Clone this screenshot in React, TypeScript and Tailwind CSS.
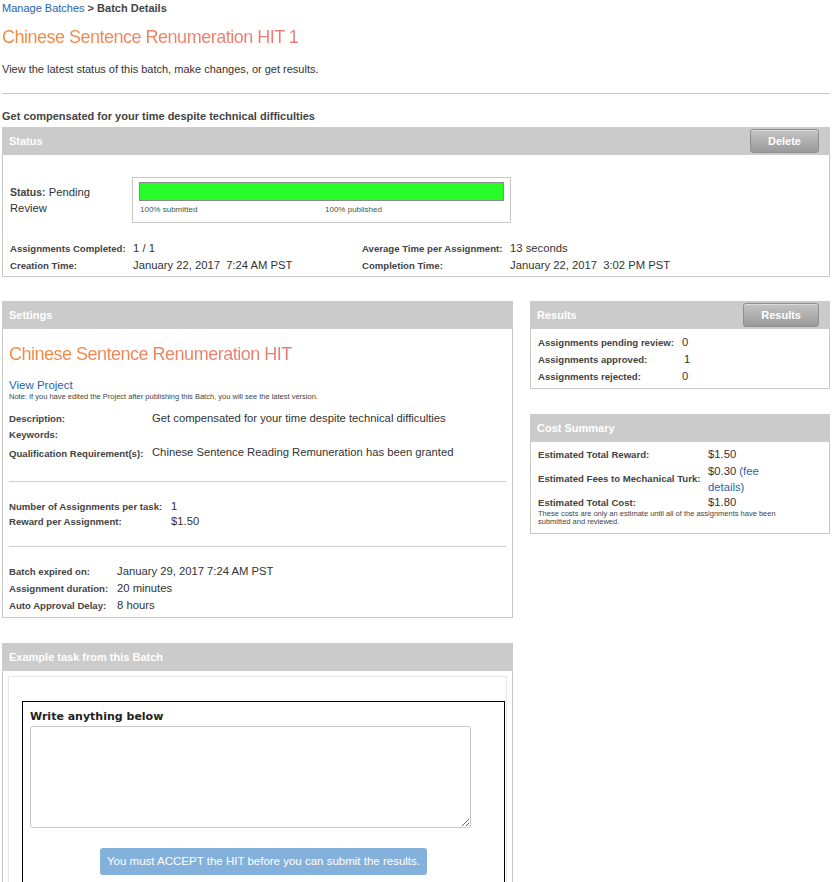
import React from 'react';

const LABEL = 'text-[9.6px] font-bold text-[#444] whitespace-nowrap';
const VALUE = 'text-[11.25px] text-[#333] whitespace-pre';
const TITLE = 'bg-gradient-to-r from-[#f28b36] to-[#ea7a78] bg-clip-text text-[18px] font-light leading-[24px] tracking-[-0.5px] text-transparent';

function PanelHeader({ title, button }: { title: string; button?: string }) {
  return (
    <div className="flex h-[28px] items-center justify-between bg-[#cbcbcb] pl-[7px] pr-[11px]">
      <span className="text-[11px] font-bold text-white">{title}</span>
      {button && (
        <button className="h-[24px] rounded-[3px] border border-[#8e8e8e] bg-gradient-to-b from-[#c4c4c4] to-[#9a9a9a] px-[17px] text-[11px] font-bold text-white shadow-[inset_0_1px_0_rgba(255,255,255,0.4)]">
          {button}
        </button>
      )}
    </div>
  );
}

function Row({ label, value, labelW, className = '' }: { label: string; value: React.ReactNode; labelW: string; className?: string }) {
  return (
    <div className={`flex items-baseline ${className}`}>
      <span className={`${LABEL} ${labelW} shrink-0`}>{label}</span>
      <span className={VALUE}>{value}</span>
    </div>
  );
}

function StatusPanel() {
  return (
    <div>
      <PanelHeader title="Status" button="Delete" />
      <div className="border border-t-0 border-[#c8c8c8] px-[7px] pb-[2px]">
        <div className="flex pt-[22px]">
          <div className="w-[122px] pt-[7px] text-[11.25px] leading-[16px] text-[#333]">
            <span className="text-[10.5px] font-bold text-[#444]">Status:</span> Pending
            <br />
            Review
          </div>
          <div className="h-[46px] w-[379px] border border-[#c8c8c8] px-[6px] pt-[4px]">
            <div className="h-[19px] border border-[#8a8a8a] bg-[#27fd27]" />
            <div className="mt-[3px] flex text-[8px] text-[#3d5c3d]">
              <span className="ml-[1px] w-[185px]">100% submitted</span>
              <span>100% published</span>
            </div>
          </div>
        </div>
        <div className="mt-[17px] flex">
          <div className="w-[352px] leading-[16px]">
            <Row label="Assignments Completed:" value="1 / 1" labelW="w-[123px]" />
            <Row label="Creation Time:" value="January 22, 2017  7:24 AM PST" labelW="w-[123px]" />
          </div>
          <div className="leading-[16px]">
            <Row label="Average Time per Assignment:" value="13 seconds" labelW="w-[148px]" />
            <Row label="Completion Time:" value="January 22, 2017  3:02 PM PST" labelW="w-[148px]" />
          </div>
        </div>
      </div>
    </div>
  );
}

function SettingsPanel() {
  return (
    <div>
      <PanelHeader title="Settings" />
      <div className="h-[289px] border border-t-0 border-[#c8c8c8] px-[6px]">
        <div className={`mt-[13px] inline-block ${TITLE}`}>Chinese Sentence Renumeration HIT</div>
        <div className="mt-[11px] text-[11.5px] leading-[14px] text-[#2464b0]">View Project</div>
        <div className="text-[7.5px] leading-[10px] text-[#444]">
          Note: If you have edited the Project after publishing this Batch, you will see the latest version.
        </div>
        <div className="mt-[8px] leading-[16px]">
          <Row label="Description:" value="Get compensated for your time despite technical difficulties" labelW="w-[143px]" />
          <Row label="Keywords:" value="" labelW="w-[143px]" />
          <div className="mt-[1px] flex items-end">
            <span className={`${LABEL} w-[143px] shrink-0`}>Qualification Requirement(s):</span>
            <span className="mb-[2px] text-[11.25px] text-[#333]">Chinese Sentence Reading Remuneration has been granted</span>
          </div>
        </div>
        <div className="mt-[19px] h-px bg-[#cfcfcf]" />
        <div className="mt-[17px] leading-[15px]">
          <Row label="Number of Assignments per task:" value="1" labelW="w-[162px]" />
          <Row label="Reward per Assignment:" value="$1.50" labelW="w-[162px]" />
        </div>
        <div className="mt-[17px] h-px bg-[#cfcfcf]" />
        <div className="mt-[16px] leading-[16px]">
          <Row label="Batch expired on:" value="January 29, 2017 7:24 AM PST" labelW="w-[108px]" />
          <Row label="Assignment duration:" value="20 minutes" labelW="w-[108px]" />
          <Row label="Auto Approval Delay:" value="8 hours" labelW="w-[108px]" />
        </div>
      </div>
    </div>
  );
}

function ResultsPanel() {
  return (
    <div>
      <PanelHeader title="Results" button="Results" />
      <div className="h-[60px] border border-t-0 border-[#c8c8c8] px-[7px] pt-[5px] leading-[16px]">
        <Row label="Assignments pending review:" value="0" labelW="w-[144px]" />
        <Row label="Assignments approved:" value="1" labelW="w-[146px]" />
        <Row label="Assignments rejected:" value="0" labelW="w-[144px]" />
      </div>
    </div>
  );
}

function CostPanel() {
  return (
    <div>
      <PanelHeader title="Cost Summary" />
      <div className="h-[92px] border border-t-0 border-[#c8c8c8] px-[7px] pt-[4px]">
        <Row label="Estimated Total Reward:" value="$1.50" labelW="w-[170px]" className="leading-[16px]" />
        <div className="flex items-center">
          <span className={`${LABEL} w-[170px] shrink-0`}>Estimated Fees to Mechanical Turk:</span>
          <span className="text-[11.25px] leading-[16px] text-[#333]">
            $0.30 <span className="text-[#2464b0]">(fee</span>
            <br />
            <span className="text-[#2464b0]">details)</span>
          </span>
        </div>
        <Row label="Estimated Total Cost:" value="$1.80" labelW="w-[170px]" className="leading-[15px]" />
        <div className="text-[7.5px] leading-[8px] text-[#444]">
          These costs are only an estimate until all of the assignments have been
          <br />
          submitted and reviewed.
        </div>
      </div>
    </div>
  );
}

function ExamplePanel() {
  return (
    <div>
      <PanelHeader title="Example task from this Batch" />
      <div className="h-[211px] border border-b-0 border-t-0 border-[#c8c8c8] px-[5px] pt-[5px]">
        <div className="h-full border border-b-0 border-[#e6e6e6] pl-[13px] pr-[1px] pt-[24px]">
          <div className="h-full border border-b-0 border-black px-[7px] pt-[8px]">
            <div className="text-[11px] font-bold leading-[14px] text-[#222]" style={{ fontFamily: '"DejaVu Sans", sans-serif' }}>
              Write anything below
            </div>
            <textarea className="mt-[2px] block h-[102px] w-[441px] resize rounded-[3px] border border-[#c8c8c8] bg-white" />
            <div className="mt-[20px] flex justify-center">
              <div className="flex h-[27px] w-[327px] items-center justify-center rounded-[3px] bg-[#84b1db] text-[11.5px] text-white">
                You must ACCEPT the HIT before you can submit the results.
              </div>
            </div>
          </div>
        </div>
      </div>
    </div>
  );
}

export default function App() {
  return (
    <div className="h-[882px] overflow-hidden bg-white pl-[2px] pr-[6px]" style={{ fontFamily: '"Liberation Sans", Arial, sans-serif' }}>
      <div className="pt-[1px] text-[11px] leading-[14px]">
        <span className="text-[#2464b0]">Manage Batches</span>
        <span className="font-bold text-[#444]"> &gt; Batch Details</span>
      </div>
      <div className={`mt-[10px] inline-block ${TITLE}`}>Chinese Sentence Renumeration HIT 1</div>
      <div className="mt-[12px] text-[11px] leading-[14px] text-[#333]">
        View the latest status of this batch, make changes, or get results.
      </div>
      <div className="mt-[17px] h-px bg-[#c8c8c8]" />
      <div className="mt-[15px] text-[11px] font-bold leading-[14px] text-[#444]">
        Get compensated for your time despite technical difficulties
      </div>
      <div className="mt-[4px]">
        <StatusPanel />
      </div>
      <div className="mt-[24px] flex gap-[17px]">
        <div className="w-[511px] shrink-0">
          <SettingsPanel />
          <div className="mt-[25px]">
            <ExamplePanel />
          </div>
        </div>
        <div className="w-[300px]">
          <ResultsPanel />
          <div className="mt-[25px]">
            <CostPanel />
          </div>
        </div>
      </div>
    </div>
  );
}
